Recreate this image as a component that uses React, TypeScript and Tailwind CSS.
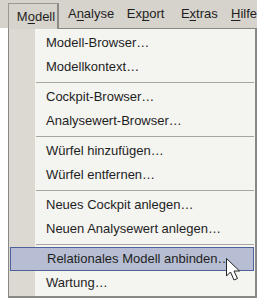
import React from "react";

const font = { fontFamily: '"Liberation Sans", Arial, sans-serif' };

function U({ children }: { children: React.ReactNode }) {
  return <span className="underline underline-offset-2 decoration-1">{children}</span>;
}

type Entry = { t: string } | { sep: true };

const entries: Entry[] = [
  { t: "Modell-Browser…" },
  { t: "Modellkontext…" },
  { sep: true },
  { t: "Cockpit-Browser…" },
  { t: "Analysewert-Browser…" },
  { sep: true },
  { t: "Würfel hinzufügen…" },
  { t: "Würfel entfernen…" },
  { sep: true },
  { t: "Neues Cockpit anlegen…" },
  { t: "Neuen Analysewert anlegen…" },
  { sep: true },
  { t: "Relationales Modell anbinden…" },
  { t: "Wartung…" },
];

export default function App() {
  return (
    <div className="relative w-[257px] h-[300px] bg-white overflow-hidden text-[13px] text-[#1e1e1e]" style={font}>
      {/* menu bar */}
      <div className="flex h-[28px] bg-[#d6d3cc] items-stretch">
        <div className="w-[8px]" />
        <div className="w-[52px] mt-[3px] border-l border-t border-r-2 border-[#9a9890] border-r-[#8c8a84] bg-[#d6d3cc] pl-[8px] flex items-center -mb-[1px] relative z-10">
          <span>M<U>o</U>dell</span>
        </div>
        <div className="w-[60px] pl-[9px] flex items-center">
          <span>A<U>n</U>alyse</span>
        </div>
        <div className="w-[55px] pl-[9px] flex items-center">
          <span>Ex<U>p</U>ort</span>
        </div>
        <div className="w-[51px] pl-[9px] flex items-center">
          <span>E<U>x</U>tras</span>
        </div>
        <div className="pl-[9px] flex items-center">
          <span><U>H</U>ilfe</span>
        </div>
      </div>
      {/* dropdown */}
      <div className="ml-[8px] w-[249px] h-[270px] border border-[#8a8884] border-r-2 border-b-2 bg-[#f4f4f1] relative">
        <div className="absolute left-0 top-0 bottom-0 w-[26px] bg-[#dcd9d2]" />
        <div className="relative pt-[2px] flex flex-col">
          {entries.map((e, i) =>
            "sep" in e ? (
              <div key={i} className="h-[6px] flex items-center pl-[27px] pr-[1px]">
                <div className="h-[1px] w-full bg-[#a8a6a0]" />
              </div>
            ) : e.t.startsWith("Relationales") ? (
              <div key={i} className="h-[24px] mx-[1px] flex items-center pl-[36px] bg-[#b7bed3] border border-[#50609a]">
                {e.t}
              </div>
            ) : (
              <div key={i} className="h-[24px] flex items-center pl-[37px]">
                {e.t}
              </div>
            )
          )}
        </div>
      </div>
      {/* cursor */}
      <svg className="absolute left-[225px] top-[257px]" width="18" height="27" viewBox="0 0 18 27">
        <path d="M1.5 1.5 L1.5 19 L5.5 15 L9 23 L12.5 21.5 L9 14 L14.5 14 Z" fill="#fff" stroke="#222" strokeWidth="1" strokeLinejoin="round" />
      </svg>
    </div>
  );
}
